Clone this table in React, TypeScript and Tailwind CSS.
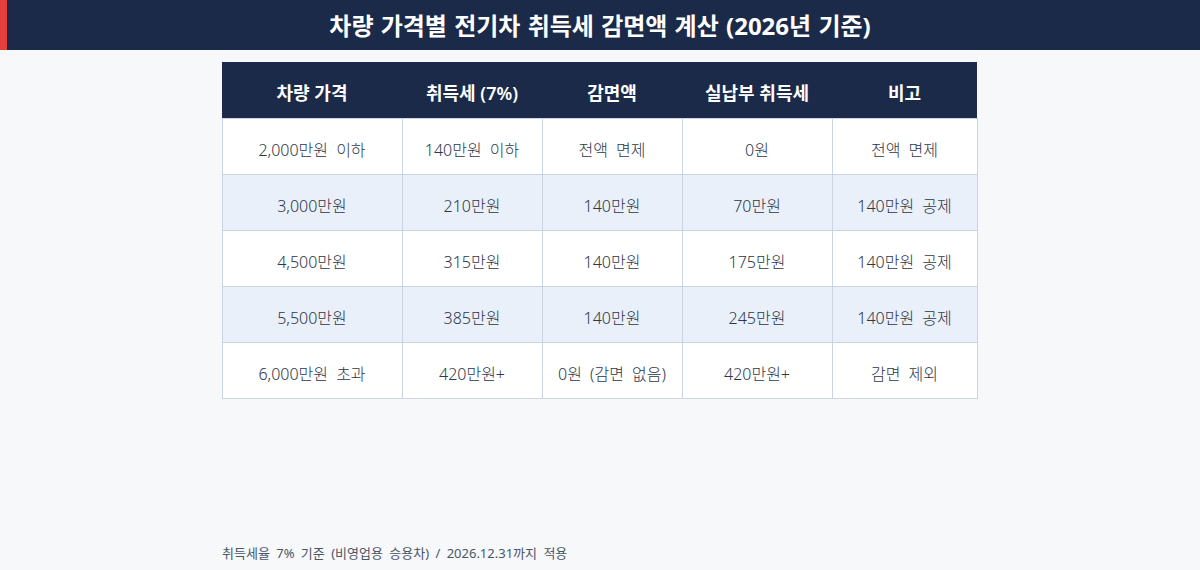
const rows = [
  ['2,000만원 이하', '140만원 이하', '전액 면제', '0원', '전액 면제'],
  ['3,000만원', '210만원', '140만원', '70만원', '140만원 공제'],
  ['4,500만원', '315만원', '140만원', '175만원', '140만원 공제'],
  ['5,500만원', '385만원', '140만원', '245만원', '140만원 공제'],
  ['6,000만원 초과', '420만원+', '0원 (감면 없음)', '420만원+', '감면 제외'],
]

const heads = ['차량 가격', '취득세 (7%)', '감면액', '실납부 취득세', '비고']
const widths = ['w-[180px]', 'w-[140px]', 'w-[140px]', 'w-[150px]', 'w-[145px]']

export default function App() {
  return (
    <div
      className="w-[1200px] h-[570px] bg-[#f7f8fa] flex flex-col"
      style={{ fontFamily: '"Noto Sans", "Noto Sans CJK KR", sans-serif' }}
    >
      <div className="h-[50px] bg-[#1b2a49] flex">
        <div className="w-[7px] bg-[#e53e3e]" />
        <h1 className="flex-1 flex items-center justify-center text-white text-[24px] font-bold pr-[7px] pt-[2px] [word-spacing:1px]">
          차량 가격별 전기차 취득세 감면액 계산 (2026년 기준)
        </h1>
      </div>

      <div className="flex justify-center mt-3 pr-[1px]">
        <table className="border-collapse text-[16px] text-[#2d3748] font-light">
          <thead>
            <tr className="bg-[#1b2a49] text-white h-[56px]">
              {heads.map((h, i) => (
                <th key={h} className={`${widths[i]} text-[18px] font-semibold text-center pt-[8px]`}>
                  {h}
                </th>
              ))}
            </tr>
          </thead>
          <tbody>
            {rows.map((r, ri) => (
              <tr key={ri} className={ri % 2 === 1 ? 'bg-[#e9f0fa] h-[56px]' : 'bg-white h-[56px]'}>
                {r.map((c, ci) => (
                  <td key={ci} className="border border-[#cbd5e1] text-center pt-[8px] [word-spacing:4px]">
                    {c}
                  </td>
                ))}
              </tr>
            ))}
          </tbody>
        </table>
      </div>

      <div className="flex-1" />
      <p className="pl-[222px] pb-[7px] text-[13px] text-[#4a5568] [word-spacing:3px]">
        취득세율 7% 기준 (비영업용 승용차) / 2026.12.31까지 적용
      </p>
    </div>
  )
}
